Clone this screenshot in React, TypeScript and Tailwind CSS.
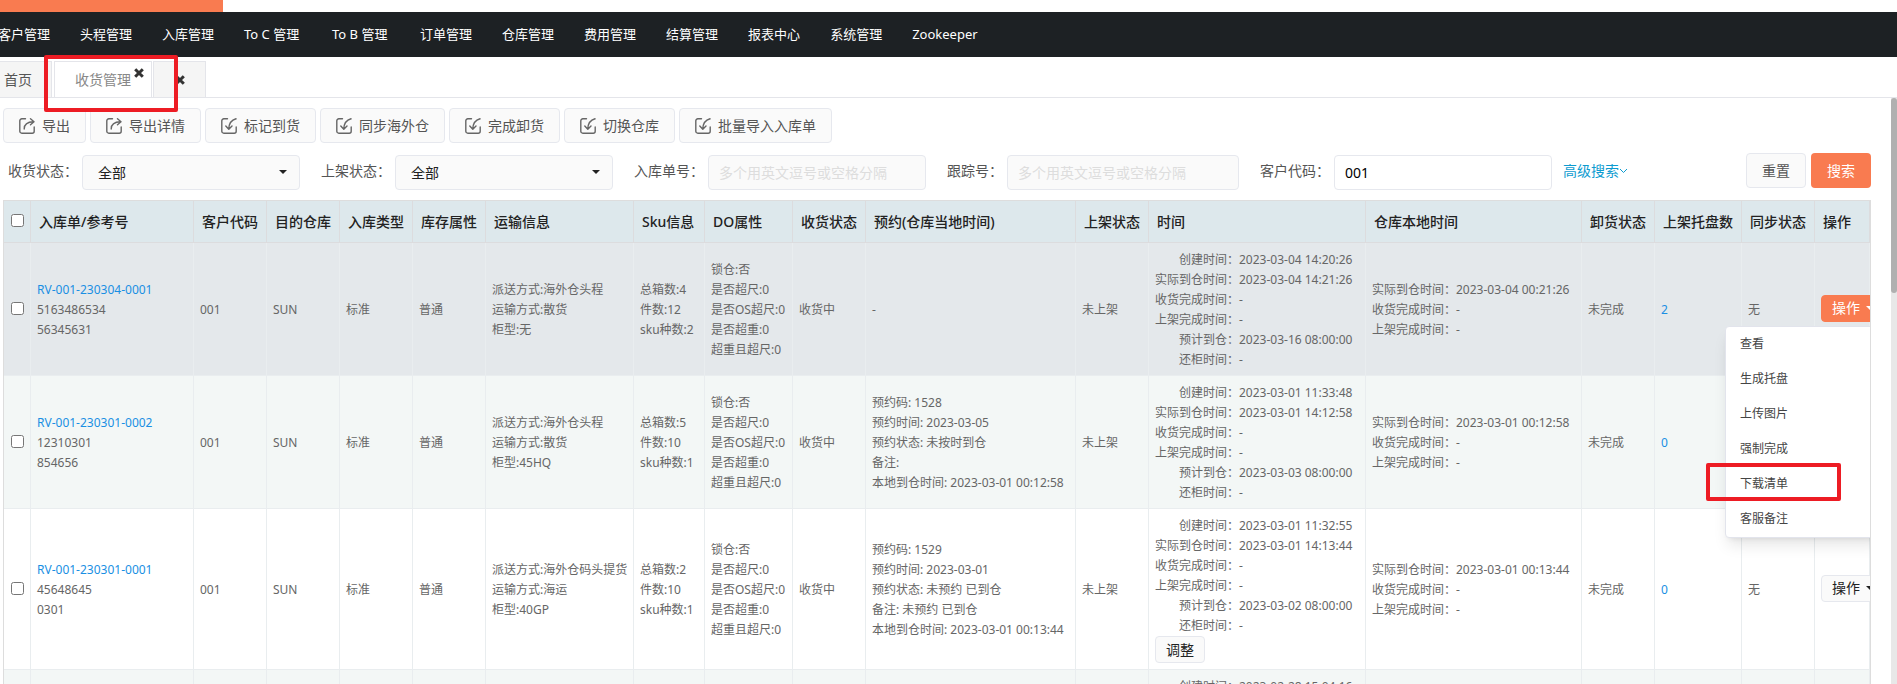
import { useState } from 'react'

const NAV_ITEMS = [
  '客户管理',
  '头程管理',
  '入库管理',
  'To C 管理',
  'To B 管理',
  '订单管理',
  '仓库管理',
  '费用管理',
  '结算管理',
  '报表中心',
  '系统管理',
  'Zookeeper',
]

const TOOLS: { label: string; icon: 'export' | 'import' }[] = [
  { label: '导出', icon: 'export' },
  { label: '导出详情', icon: 'export' },
  { label: '标记到货', icon: 'import' },
  { label: '同步海外仓', icon: 'import' },
  { label: '完成卸货', icon: 'import' },
  { label: '切换仓库', icon: 'import' },
  { label: '批量导入入库单', icon: 'import' },
]

const COLUMNS = [
  { title: '入库单/参考号', width: 'w-[163px]' },
  { title: '客户代码', width: 'w-[73px]' },
  { title: '目的仓库', width: 'w-[73px]' },
  { title: '入库类型', width: 'w-[73px]' },
  { title: '库存属性', width: 'w-[73px]' },
  { title: '运输信息', width: 'w-[148px]' },
  { title: 'Sku信息', width: 'w-[71px]' },
  { title: 'DO属性', width: 'w-[88px]' },
  { title: '收货状态', width: 'w-[73px]' },
  { title: '预约(仓库当地时间)', width: 'w-[210px]' },
  { title: '上架状态', width: 'w-[73px]' },
  { title: '时间', width: 'w-[217px]' },
  { title: '仓库本地时间', width: 'w-[216px]' },
  { title: '卸货状态', width: 'w-[73px]' },
  { title: '上架托盘数', width: 'w-[87px]' },
  { title: '同步状态', width: 'w-[73px]' },
  { title: '操作', width: '' },
]

const MENU_ITEMS = ['查看', '生成托盘', '上传图片', '强制完成', '下载清单', '客服备注']

const DO_INFO = ['锁仓:否', '是否超尺:0', '是否OS超尺:0', '是否超重:0', '超重且超尺:0']

interface Order {
  code: string
  refs: string[]
  transport: string[]
  sku: string[]
  booking: string[]
  created: string
  arrived: string
  eta: string
  localArrived: string
  pallets: number
  bg: string
  adjustable?: boolean
}

const ORDERS: Order[] = [
  {
    code: 'RV-001-230304-0001',
    refs: ['5163486534', '56345631'],
    transport: ['派送方式:海外仓头程', '运输方式:散货', '柜型:无'],
    sku: ['总箱数:4', '件数:12', 'sku种数:2'],
    booking: ['-'],
    created: '2023-03-04 14:20:26',
    arrived: '2023-03-04 14:21:26',
    eta: '2023-03-16 08:00:00',
    localArrived: '2023-03-04 00:21:26',
    pallets: 2,
    bg: 'bg-[#e4e8eb]',
  },
  {
    code: 'RV-001-230301-0002',
    refs: ['12310301', '854656'],
    transport: ['派送方式:海外仓头程', '运输方式:散货', '柜型:45HQ'],
    sku: ['总箱数:5', '件数:10', 'sku种数:1'],
    booking: [
      '预约码: 1528',
      '预约时间: 2023-03-05',
      '预约状态: 未按时到仓',
      '备注:',
      '本地到仓时间: 2023-03-01 00:12:58',
    ],
    created: '2023-03-01 11:33:48',
    arrived: '2023-03-01 14:12:58',
    eta: '2023-03-03 08:00:00',
    localArrived: '2023-03-01 00:12:58',
    pallets: 0,
    bg: 'bg-[#f3f7f6]',
  },
  {
    code: 'RV-001-230301-0001',
    refs: ['45648645', '0301'],
    transport: ['派送方式:海外仓码头提货', '运输方式:海运', '柜型:40GP'],
    sku: ['总箱数:2', '件数:10', 'sku种数:1'],
    booking: [
      '预约码: 1529',
      '预约时间: 2023-03-01',
      '预约状态: 未预约 已到仓',
      '备注: 未预约 已到仓',
      '本地到仓时间: 2023-03-01 00:13:44',
    ],
    created: '2023-03-01 11:32:55',
    arrived: '2023-03-01 14:13:44',
    eta: '2023-03-02 08:00:00',
    localArrived: '2023-03-01 00:13:44',
    pallets: 0,
    bg: 'bg-white',
    adjustable: true,
  },
  {
    code: 'RV-001-230228-0001',
    refs: ['45648612', '0228'],
    transport: ['派送方式:海外仓头程', '运输方式:散货', '柜型:无'],
    sku: ['总箱数:1', '件数:10', 'sku种数:1'],
    booking: ['-'],
    created: '2023-02-28 15:04:16',
    arrived: '-',
    eta: '-',
    localArrived: '-',
    pallets: 0,
    bg: 'bg-[#f3f7f6]',
  },
]

function ToolIcon({ name }: { name: 'export' | 'import' }) {
  return (
    <svg
      className="h-4 w-4 shrink-0"
      viewBox="0 0 16 16"
      fill="none"
      stroke="#666"
      strokeWidth="1.4"
      strokeLinecap="round"
      strokeLinejoin="round"
      aria-hidden="true"
    >
      {name === 'export' ? (
        <>
          <path d="M6.500 0.800H2.800A2 2 0 0 0 0.800 2.800V13.200A2 2 0 0 0 2.800 15.200H13.200A2 2 0 0 0 15.200 13.200V9" />
          <path d="M5.200 11C5.200 7 8 4 14.500 3.800M11.500 0.800L15 3.800L11.500 6.800" />
        </>
      ) : (
        <>
          <path d="M6.500 0.800H2.800A2 2 0 0 0 0.800 2.800V13.200A2 2 0 0 0 2.800 15.200H13.200A2 2 0 0 0 15.200 13.200V9" />
          <path d="M15 0.800C10.500 2 8 5 7.800 11M4.800 8L7.800 11.200L11 8" />
        </>
      )}
    </svg>
  )
}

function CloseIcon() {
  return (
    <svg className="h-2.5 w-2.5" viewBox="0 0 10 10" stroke="#333" strokeWidth="3" aria-hidden="true">
      <path d="M1.200 1.200L8.800 8.800M8.800 1.200L1.200 8.800" />
    </svg>
  )
}

function Caret() {
  return (
    <svg className="h-1 w-2 shrink-0" viewBox="0 0 8 4" fill="currentColor" aria-hidden="true">
      <path d="M0 0H8L4 4Z" />
    </svg>
  )
}

function StatusSelect({ id, label }: { id: string; label: string }) {
  return (
    <div className="flex items-start">
      <label htmlFor={id} className="w-[74px] pt-1.5 leading-5">
        {label}
      </label>
      <div className="relative text-[#222]">
        <select
          id={id}
          className="h-[35px] w-[218px] appearance-none rounded border border-[#e6e8ee] bg-[#fafafa] pl-[15px] text-sm"
        >
          <option>全部</option>
        </select>
        <span className="pointer-events-none absolute top-[15px] right-[13px]">
          <Caret />
        </span>
      </div>
    </div>
  )
}

function Lines({ items }: { items: string[] }) {
  return (
    <>
      {items.map((item) => (
        <div key={item}>{item}</div>
      ))}
    </>
  )
}

function TimeLines({ items }: { items: [string, string][] }) {
  return (
    <>
      {items.map(([label, value]) => (
        <div key={label} className="flex">
          <span className="w-[84px] shrink-0 text-right">{label}：</span>
          <span>{value}</span>
        </div>
      ))}
    </>
  )
}

function ActionCell({ open, onToggle }: { open: boolean; onToggle: () => void }) {
  return (
    <div className="relative mb-1">
      <button
        type="button"
        onClick={onToggle}
        className={
          open
            ? 'flex h-[27px] items-center gap-1.5 rounded border border-[#f97b50] bg-[#f97b50] px-2.5 text-sm text-white'
            : 'flex h-[27px] items-center gap-1.5 rounded border border-[#e6e8ee] bg-[#fafafa] px-2.5 text-sm text-[#222]'
        }
      >
        <span className="shrink-0">操作</span>
        <Caret />
      </button>
      {open && (
        <ul className="absolute top-[31px] -left-24 z-10 w-40 rounded border border-[#e2e4ec] bg-white text-[#444] shadow-lg">
          {MENU_ITEMS.map((item) => (
            <li key={item} className="relative">
              <button type="button" className="block h-[35px] w-full px-3.5 text-left">
                {item}
              </button>
              {item === '下载清单' && (
                <span className="pointer-events-none absolute -top-1 -left-5 h-[38px] w-[135px] rounded-xs border-4 border-[#ed1c24]" />
              )}
            </li>
          ))}
        </ul>
      )}
    </div>
  )
}

function OrderRow({ order, open, onToggle }: { order: Order; open: boolean; onToggle: () => void }) {
  return (
    <tr className={order.bg}>
      <td>
        <input type="checkbox" aria-label={order.code} className="mb-1 ml-px block h-[13px] w-[13px]" />
      </td>
      <td>
        <a href="#" className="text-[#1a8fe3]">
          {order.code}
        </a>
        <Lines items={order.refs} />
      </td>
      <td>001</td>
      <td>SUN</td>
      <td>标准</td>
      <td>普通</td>
      <td>
        <Lines items={order.transport} />
      </td>
      <td>
        <Lines items={order.sku} />
      </td>
      <td>
        <Lines items={DO_INFO} />
      </td>
      <td>收货中</td>
      <td>
        <Lines items={order.booking} />
      </td>
      <td>未上架</td>
      <td>
        <TimeLines
          items={[
            ['创建时间', order.created],
            ['实际到仓时间', order.arrived],
            ['收货完成时间', '-'],
            ['上架完成时间', '-'],
            ['预计到仓', order.eta],
            ['还柜时间', '-'],
          ]}
        />
        {order.adjustable && (
          <button
            type="button"
            className="mb-px block h-[27px] rounded border border-[#e6e8ee] bg-[#fafafa] px-2.5 text-sm leading-6 text-[#222]"
          >
            调整
          </button>
        )}
      </td>
      <td>
        <TimeLines
          items={[
            ['实际到仓时间', order.localArrived],
            ['收货完成时间', '-'],
            ['上架完成时间', '-'],
          ]}
        />
      </td>
      <td>未完成</td>
      <td>
        <a href="#" className="text-[#1a8fe3]">
          {order.pallets}
        </a>
      </td>
      <td>无</td>
      <td>
        <ActionCell open={open} onToggle={onToggle} />
      </td>
    </tr>
  )
}

export default function App() {
  const [openRow, setOpenRow] = useState<number | null>(0)

  return (
    <div className="flex h-screen flex-col overflow-hidden bg-white font-['Noto_Sans','Noto_Sans_CJK_SC',sans-serif] text-sm text-[#555]">
      <div className="h-3 w-[223px] shrink-0 bg-[#f97b50]" />
      <nav className="-ml-[17px] flex h-[45px] shrink-0 items-center bg-[#1d2124] text-[13px] text-white">
        {NAV_ITEMS.map((item) => (
          <a
            key={item}
            href="#"
            className={item.startsWith('To') ? 'min-w-[88px] px-[15px] whitespace-nowrap' : 'px-[15px] whitespace-nowrap'}
          >
            {item}
          </a>
        ))}
      </nav>

      <div className="flex h-[41px] shrink-0 items-end gap-0.5 border-b border-[#e4e5ea]">
        <button
          type="button"
          className="h-9 w-[52px] border-t border-r border-[#e4e5ea] bg-[#f5f5f5] pl-1 text-left"
        >
          首页
        </button>
        <div className="relative">
          <button
            type="button"
            className="block h-9 w-[98px] border-x border-t border-[#e4e5ea] bg-white pl-5 text-left text-[#888]"
          >
            收货管理
          </button>
          <span className="absolute top-[7px] right-2">
            <CloseIcon />
          </span>
          <span className="pointer-events-none absolute -top-1.5 -left-2.5 z-10 h-[57px] w-[134px] rounded-xs border-4 border-[#ed1c24]" />
        </div>
        <button
          type="button"
          aria-label="关闭"
          className="-ml-px flex h-9 w-[53px] items-center justify-center border-x border-t border-[#e4e5ea] bg-[#f5f5f5]"
        >
          <CloseIcon />
        </button>
      </div>

      <div className="flex min-h-0 flex-1">
        <main className="flex min-w-0 flex-1 flex-col pr-5 pl-[3px]">
          <div className="mt-2.5 flex gap-1">
            {TOOLS.map((tool) => (
              <button
                key={tool.label}
                type="button"
                className="flex h-[35px] items-center gap-[7px] rounded border border-[#e6e8ee] bg-[#fafafa] px-[15px] whitespace-nowrap"
              >
                <ToolIcon name={tool.icon} />
                {tool.label}
              </button>
            ))}
          </div>

          <form className="mt-2.5 flex items-start justify-between pl-[5px]">
            <div className="flex items-start gap-[21px] pt-0.5">
              <StatusSelect id="receive-status" label="收货状态：" />
              <StatusSelect id="shelf-status" label="上架状态：" />
              <div className="flex items-start">
                <label htmlFor="order-no" className="w-[74px] pt-1.5 leading-5">
                  入库单号：
                </label>
                <input
                  id="order-no"
                  placeholder="多个用英文逗号或空格分隔"
                  className="h-[35px] w-[218px] rounded border border-[#e6e8ee] bg-[#fafafa] px-2.5 placeholder:text-[#ddd]"
                />
              </div>
              <div className="flex items-start">
                <label htmlFor="tracking-no" className="w-[60px] pt-1.5 leading-5">
                  跟踪号：
                </label>
                <input
                  id="tracking-no"
                  placeholder="多个用英文逗号或空格分隔"
                  className="h-[35px] w-[232px] rounded border border-[#e6e8ee] bg-[#fafafa] px-2.5 placeholder:text-[#ddd]"
                />
              </div>
              <div className="flex items-start">
                <label htmlFor="customer" className="w-[74px] pt-1.5 leading-5">
                  客户代码：
                </label>
                <input
                  id="customer"
                  defaultValue="001"
                  className="h-[35px] w-[218px] rounded border border-[#e6e8ee] bg-white px-2.5 text-black"
                />
                <a href="#" className="ml-[11px] flex items-center pt-1.5 leading-5 text-[#0d9bd0]">
                  高级搜索
                  <svg className="h-2.5 w-2.5" viewBox="0 0 10 10" fill="none" stroke="currentColor" aria-hidden="true">
                    <path d="M1 3L4.500 6.500L8 3" />
                  </svg>
                </a>
              </div>
            </div>
            <div className="flex gap-[5px]">
              <button type="reset" className="h-[35px] w-[60px] rounded border border-[#e6e8ee] bg-[#fafafa]">
                重置
              </button>
              <button type="button" className="h-[35px] w-[60px] rounded bg-[#f97b50] text-white">
                搜索
              </button>
            </div>
          </form>

          <div className="mt-2.5 min-h-0 flex-1 overflow-hidden border-x border-t border-[#ddd]">
            <table className="w-full table-fixed border-separate border-spacing-0 text-left text-xs leading-5 text-[#666] [&_td]:border-r [&_td]:border-b [&_td]:border-[#e9edef] [&_td]:px-1.5 [&_td]:pt-[7px] [&_td]:pb-[5px] [&_td]:whitespace-nowrap">
              <thead>
                <tr className="h-[42px] bg-[#dde8ec] text-sm text-[#222] [&_th]:border-r [&_th]:border-b [&_th]:border-[#dcdcde] [&_th]:font-medium [&_th]:whitespace-nowrap">
                  <th className="w-[27px] px-[7px]">
                    <input type="checkbox" aria-label="全选" className="mb-0.5 block h-[13px] w-[13px]" />
                  </th>
                  {COLUMNS.map((column) => (
                    <th key={column.title} className={`pl-2 ${column.width}`}>
                      {column.title}
                    </th>
                  ))}
                </tr>
              </thead>
              <tbody>
                {ORDERS.map((order, index) => (
                  <OrderRow
                    key={order.code}
                    order={order}
                    open={openRow === index}
                    onToggle={() => setOpenRow(openRow === index ? null : index)}
                  />
                ))}
              </tbody>
            </table>
          </div>
        </main>

        {/* scroll track */}
        <div className="w-1.5 shrink-0 bg-[#e8e8e8]">
          <div className="h-1/3 rounded-full bg-[#b0b0b0]" />
        </div>
      </div>
    </div>
  )
}
